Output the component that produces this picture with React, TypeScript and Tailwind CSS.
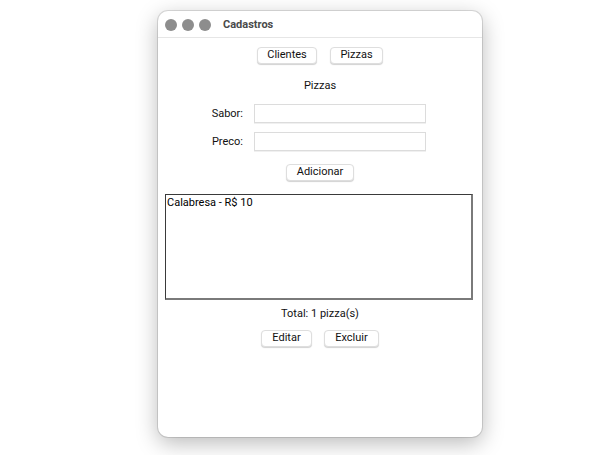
import React from "react";

const font = { fontFamily: "Roboto, 'Liberation Sans', sans-serif" };

function Btn({ w, children }: { w: string; children: React.ReactNode }) {
  return (
    <div
      className={`${w} h-[17px] flex items-center justify-center rounded-[4px] bg-white border border-[#dedede] shadow-[0_1px_1px_rgba(0,0,0,0.18)] text-[11px] text-[#111]`}
    >
      {children}
    </div>
  );
}

export default function App() {
  return (
    <div className="w-[612px] h-[455px] bg-white overflow-hidden pl-[158px] pt-[11px]" style={font}>
      <div className="w-[324px] h-[426px] bg-white rounded-[10px] shadow-[0_0_0_1px_rgba(0,0,0,0.12),0_6px_22px_rgba(0,0,0,0.28)] flex flex-col overflow-hidden">
        <div className="h-[27px] flex items-center border-b border-[#e6e6e6] shrink-0 pt-[1px]">
          <div className="flex items-center gap-[5px] ml-[7px]">
            <div className="w-[12px] h-[12px] rounded-full bg-[#8d8d8d]" />
            <div className="w-[12px] h-[12px] rounded-full bg-[#8d8d8d]" />
            <div className="w-[12px] h-[12px] rounded-full bg-[#8d8d8d]" />
          </div>
          <div className="ml-[12px] pt-[1px] text-[11px] font-bold text-[#4a4a4a]">Cadastros</div>
        </div>
        <div className="flex flex-col items-center">
          <div className="mt-[9px] flex gap-[13px]">
            <Btn w="w-[60px]">Clientes</Btn>
            <Btn w="w-[53px]">Pizzas</Btn>
          </div>
          <div className="mt-[15px] leading-[14px] text-[11px] text-[#111]">Pizzas</div>
          <div className="mt-[11px] flex flex-col gap-[9px] mr-[11px]">
            <div className="flex items-center gap-[11px]">
              <div className="w-[40px] pt-[2px] text-right text-[11px] text-[#111]">Sabor:</div>
              <div className="w-[172px] h-[19px] bg-white border border-[#dcdcdc] shadow-[0_1px_0_rgba(0,0,0,0.06)]" />
            </div>
            <div className="flex items-center gap-[11px]">
              <div className="w-[40px] pt-[2px] text-right text-[11px] text-[#111]">Preco:</div>
              <div className="w-[172px] h-[19px] bg-white border border-[#dcdcdc] shadow-[0_1px_0_rgba(0,0,0,0.06)]" />
            </div>
          </div>
          <div className="mt-[13px]">
            <Btn w="w-[68px]">Adicionar</Btn>
          </div>
        </div>
        <div className="mt-[13px] ml-[7px] w-[308px] h-[106px] border-t border-l border-[#3a3a3a] border-r-2 border-b-2 border-r-[#7a7a7a] border-b-[#7a7a7a] pl-[1px] pt-[1px]">
          <div className="text-[11px] leading-[14px] text-black">Calabresa - R$ 10</div>
        </div>
        <div className="flex flex-col items-center">
          <div className="mt-[7px] leading-[14px] text-[11px] text-[#111]">Total: 1 pizza(s)</div>
          <div className="mt-[9px] flex gap-[12px]">
            <Btn w="w-[51px]">Editar</Btn>
            <Btn w="w-[55px]">Excluir</Btn>
          </div>
        </div>
      </div>
    </div>
  );
}
